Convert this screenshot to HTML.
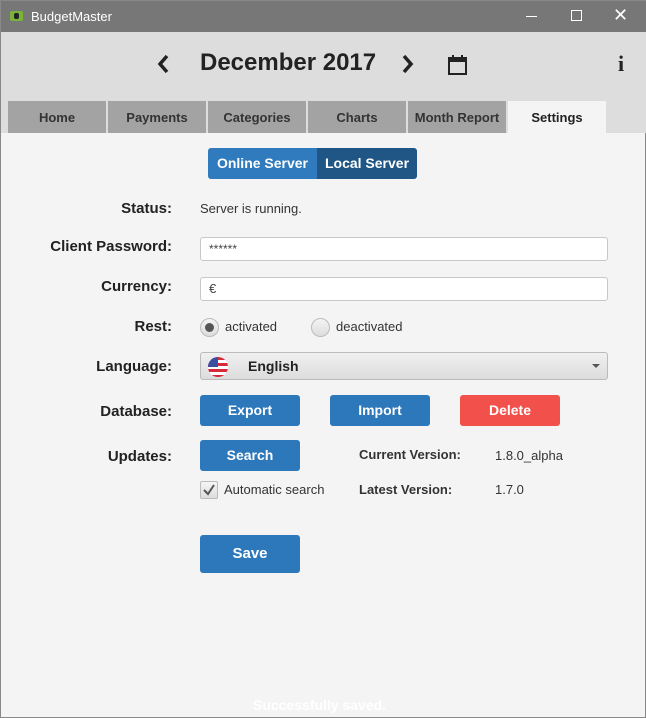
<!DOCTYPE html>
<html><head><style>
*{margin:0;padding:0;box-sizing:border-box}
body{width:646px;height:718px;overflow:hidden;font-family:"Liberation Sans",sans-serif;background:#f4f4f4;position:relative;border:1px solid #888}
.abs{position:absolute}
.title{left:0;top:0;width:646px;height:31px;background:#777;color:#fff;font-size:13px}
.hdr{left:0;top:31px;width:646px;height:101px;background:#dddddd}
.tab{top:100px;height:32px;width:98px;background:#a3a3a3;color:#333;font-size:13px;font-weight:bold;text-align:center;line-height:33px}
.lbl{right:473px;font-size:15px;font-weight:bold;color:#222;text-align:right}
.txt{font-size:13px;color:#333}
.inp{left:199px;width:408px;height:24px;background:#fff;border:1px solid #c8c8c8;border-radius:3px;font-size:12px;padding-left:8px;line-height:22px;color:#444}
.btn{width:100px;height:31px;background:#2d78bb;border-radius:3px;color:#fff;font-weight:bold;font-size:14px;text-align:center;line-height:31px}
.radio{width:19px;height:19px;border-radius:50%;border:1px solid #bbb;background:linear-gradient(#f4f4f4,#ddd)}
</style></head><body>
<div class="abs title">
 <div class="abs" style="left:9px;top:10px;width:13px;height:10px;background:#7bb33a;border-radius:2px"><div style="margin:2px 4px;width:5px;height:6px;background:#222;border-radius:2px"></div></div>
 <div class="abs" style="left:30px;top:8px">BudgetMaster</div>
 <div class="abs" style="left:525px;top:15px;width:11px;height:1px;background:#fff"></div>
 <div class="abs" style="left:570px;top:9px;width:11px;height:11px;border:1px solid #fff"></div>
 <div class="abs" style="left:612px;top:4px;font-size:18px">✕</div>
</div>
<div class="abs hdr"></div>
<svg class="abs" style="left:155px;top:53px" width="14" height="20"><path d="M11 2 L4 10 L11 18" stroke="#222" stroke-width="3.5" fill="none"/></svg>
<div class="abs" style="left:199px;top:48px;font-size:24px;font-weight:bold;color:#222">December 2017</div>
<svg class="abs" style="left:400px;top:53px" width="14" height="20"><path d="M3 2 L10 10 L3 18" stroke="#222" stroke-width="3.5" fill="none"/></svg>
<svg class="abs" style="left:446px;top:53px" width="22" height="22"><rect x="2" y="4" width="17" height="16" fill="none" stroke="#222" stroke-width="2"/><rect x="2" y="4" width="17" height="4" fill="#222"/><rect x="5" y="1" width="2" height="5" fill="#222"/><rect x="14" y="1" width="2" height="5" fill="#222"/></svg>
<div class="abs" style="left:617px;top:50px;font-size:22px;font-weight:bold;color:#222;font-family:'Liberation Serif',serif">i</div>
<div class="abs tab" style="left:7px">Home</div>
<div class="abs tab" style="left:107px">Payments</div>
<div class="abs tab" style="left:207px">Categories</div>
<div class="abs tab" style="left:307px">Charts</div>
<div class="abs tab" style="left:407px">Month Report</div>
<div class="abs tab" style="left:507px;background:#f4f4f4;color:#222">Settings</div>

<div class="abs" style="left:207px;top:147px;width:209px;height:31px;border-radius:3px;overflow:hidden;color:#fff;font-weight:bold;font-size:14px;line-height:31px">
 <div class="abs" style="left:0;top:0;width:109px;height:31px;background:#2f7bbd;text-align:center">Online Server</div>
 <div class="abs" style="left:109px;top:0;width:100px;height:31px;background:#1f5685;text-align:center">Local Server</div>
</div>

<div class="abs lbl" style="top:199px">Status:</div>
<div class="abs txt" style="left:199px;top:200px">Server is running.</div>
<div class="abs lbl" style="top:237px">Client Password:</div>
<div class="abs inp" style="top:236px">******</div>
<div class="abs lbl" style="top:277px">Currency:</div>
<div class="abs inp" style="top:276px;font-size:13px">€</div>
<div class="abs lbl" style="top:317px">Rest:</div>
<div class="abs radio" style="left:199px;top:317px"><div style="margin:4px;width:9px;height:9px;border-radius:50%;background:#555"></div></div>
<div class="abs txt" style="left:224px;top:318px">activated</div>
<div class="abs radio" style="left:310px;top:317px"></div>
<div class="abs txt" style="left:335px;top:318px">deactivated</div>
<div class="abs lbl" style="top:357px">Language:</div>
<div class="abs" style="left:199px;top:351px;width:408px;height:28px;border:1px solid #bbb;border-radius:3px;background:linear-gradient(#f0f0f0,#dcdcdc)">
 <div class="abs" style="left:7px;top:4px;width:20px;height:20px;border-radius:50%;overflow:hidden;background:repeating-linear-gradient(#d52b3a 0 3px,#fff 3px 6px)"><div style="width:10px;height:10px;background:#3a4fa0"></div></div>
 <div class="abs" style="left:47px;top:5px;font-size:14px;font-weight:bold;color:#222">English</div>
 <div class="abs" style="left:391px;top:11px;border:4px solid transparent;border-top:4px solid #555"></div>
</div>
<div class="abs lbl" style="top:402px">Database:</div>
<div class="abs btn" style="left:199px;top:394px">Export</div>
<div class="abs btn" style="left:329px;top:394px">Import</div>
<div class="abs btn" style="left:459px;top:394px;background:#f2514b">Delete</div>
<div class="abs lbl" style="top:447px">Updates:</div>
<div class="abs btn" style="left:199px;top:439px">Search</div>
<div class="abs" style="left:358px;top:446px;font-size:13px;font-weight:bold;color:#333">Current Version:</div>
<div class="abs txt" style="left:494px;top:447px">1.8.0_alpha</div>
<div class="abs" style="left:199px;top:480px;width:18px;height:18px;border:1px solid #bbb;border-radius:2px;background:linear-gradient(#f4f4f4,#ddd)"><svg width="16" height="16"><path d="M3 8 L7 12 L13 3" stroke="#555" stroke-width="2" fill="none"/></svg></div>
<div class="abs txt" style="left:223px;top:481px">Automatic search</div>
<div class="abs" style="left:358px;top:481px;font-size:13px;font-weight:bold;color:#333">Latest Version:</div>
<div class="abs txt" style="left:494px;top:481px">1.7.0</div>
<div class="abs btn" style="left:199px;top:534px;height:38px;line-height:38px;font-size:15px">Save</div>
<div class="abs" style="left:252px;top:696px;font-size:14px;font-weight:bold;color:#fff">Successfully saved.</div>
</body></html>
